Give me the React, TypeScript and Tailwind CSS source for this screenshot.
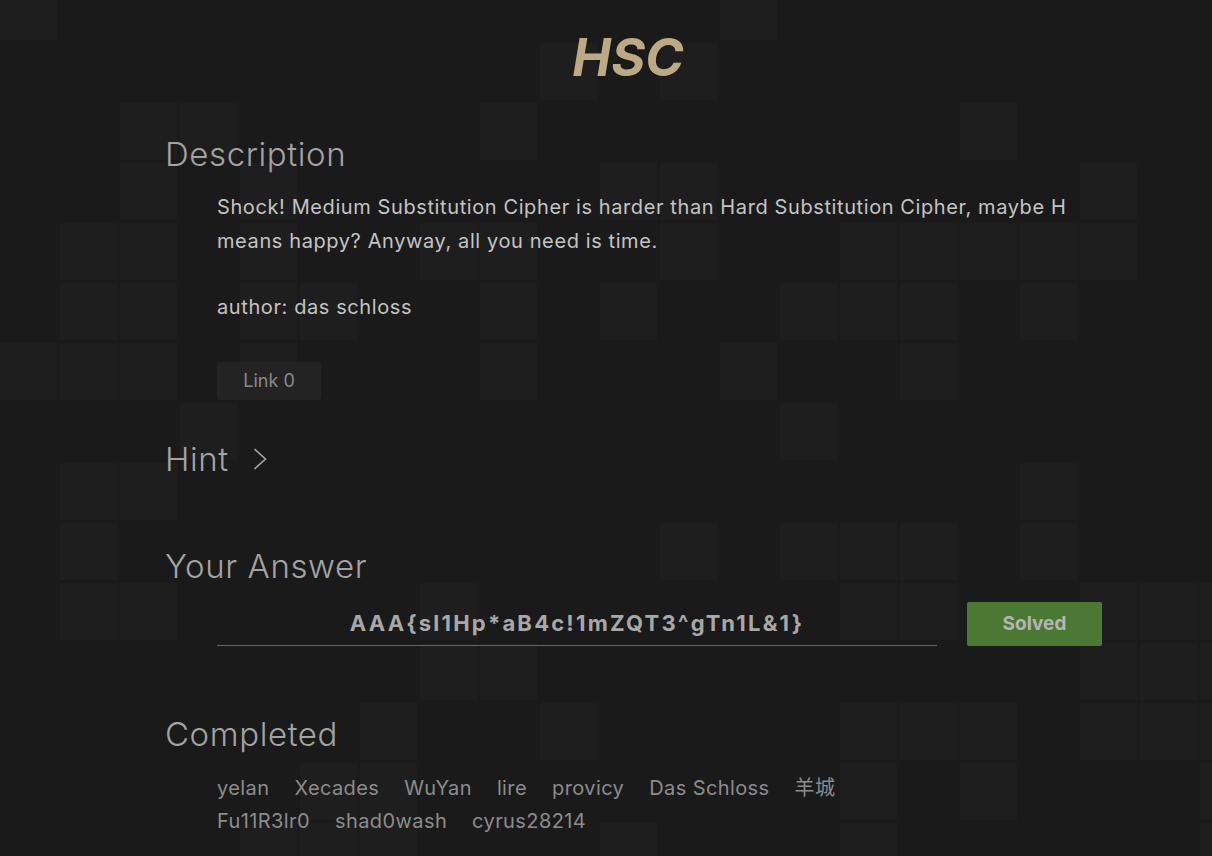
import { Fragment } from "react";

// lit squares of the background grid, by row (column indexes)
const litCells: number[][] = [
  [0, 12],
  [9, 11],
  [2, 3, 8, 16],
  [2, 4, 10, 11, 18],
  [1, 2, 4, 7, 8, 11, 14, 15, 16, 17, 18],
  [1, 2, 4, 5, 8, 10, 13, 14, 15, 17],
  [0, 1, 2, 4, 8, 12, 15],
  [3, 13],
  [1, 2, 17],
  [1, 11, 13, 14, 15, 17],
  [1, 2, 7, 14, 15, 18, 19, 20],
  [7, 8, 18, 19, 20],
  [6, 9, 14, 15, 16, 18, 19, 20],
  [5, 6, 14, 16, 20],
  [4, 5, 6, 10, 14, 20],
];

const solvers = [
  "yelan",
  "Xecades",
  "WuYan",
  "lire",
  "provicy",
  "Das Schloss",
  "羊城",
  "Fu11R3lr0",
  "shad0wash",
  "cyrus28214",
];

function Backdrop() {
  return (
    <div className="pointer-events-none absolute inset-0 overflow-hidden">
      <div className="-mt-[17px] grid grid-cols-[repeat(21,57px)] auto-rows-[57px] gap-[3px]">
        {litCells.map((row, r) => (
          <Fragment key={r}>
            {Array.from({ length: 21 }).map((_, c) => (
              <div key={c} className={row.includes(c) ? "bg-[#1e1e1e]" : "bg-transparent"} />
            ))}
          </Fragment>
        ))}
      </div>
    </div>
  );
}

function Heading({ children }: { children: React.ReactNode }) {
  return (
    <h2 className="text-[33px] font-light leading-[40px] tracking-[0.6px] text-[#a3a3a3]">{children}</h2>
  );
}

export default function App() {
  return (
    <div
      className="relative h-[856px] w-full overflow-hidden bg-[#1a1a1a]"
      style={{ fontFamily: "Inter, 'Noto Sans CJK SC', sans-serif" }}
    >
      <Backdrop />
      <main className="relative ml-[165px] flex w-[937px] flex-col">
        {/* Title */}
        <h1 className="mt-[31px] pr-[11px] text-center text-[52px] font-bold italic leading-[54px] text-[#bda985]">HSC</h1>

        {/* Description */}
        <section className="mt-[49px]">
          <Heading>Description</Heading>
          <div className="mt-[16px] pl-[52px] text-[20px] leading-[34px] tracking-[0.6px] text-[#c4c4c4]">
            <p>
              Shock! Medium Substitution Cipher is harder than Hard Substitution Cipher, maybe H means happy? Anyway,
              all you need is time.
            </p>
            <p className="mt-[32px]">author: das schloss</p>
            <button className="mt-[38px] h-[38px] w-[104px] rounded-[3px] bg-[#232323] text-[18px] tracking-normal text-[#8a8a8a]">
              Link 0
            </button>
          </div>
        </section>

        {/* Hint */}
        <section className="mt-[39px] flex items-center gap-[24px]">
          <Heading>Hint</Heading>
          <svg width="14" height="22" viewBox="0 0 14 22" fill="none" stroke="#a3a3a3" strokeWidth="1.6">
            <polyline points="1.5,1 12.5,11 1.5,21" />
          </svg>
        </section>

        {/* Answer */}
        <section className="mt-[67px]">
          <Heading>Your Answer</Heading>
          <div className="mt-[16px] flex items-center pl-[52px]">
            <div className="flex h-[44px] w-[720px] items-center justify-center border-b border-[#4e7a34] text-[22px] font-bold tracking-[2.2px] text-[#a8a8a8]">
              AAA{"{"}sl1Hp*aB4c!1mZQT3^gTn1L&amp;1{"}"}
            </div>
            <button className="ml-[30px] h-[44px] w-[135px] rounded-[2px] bg-[#4b7832] text-[19px] font-bold text-[#b5b5b5]">
              Solved
            </button>
          </div>
        </section>

        {/* Completed */}
        <section className="mt-[68px]">
          <Heading>Completed</Heading>
          <ul className="mt-[18px] flex w-[700px] flex-wrap gap-x-[25px] pl-[52px] text-[20px] leading-[33px] tracking-[0.4px] text-[#8c8c8c]">
            {solvers.map((name, index) => (
              <li key={index}>{name}</li>
            ))}
          </ul>
        </section>
      </main>
    </div>
  );
}
